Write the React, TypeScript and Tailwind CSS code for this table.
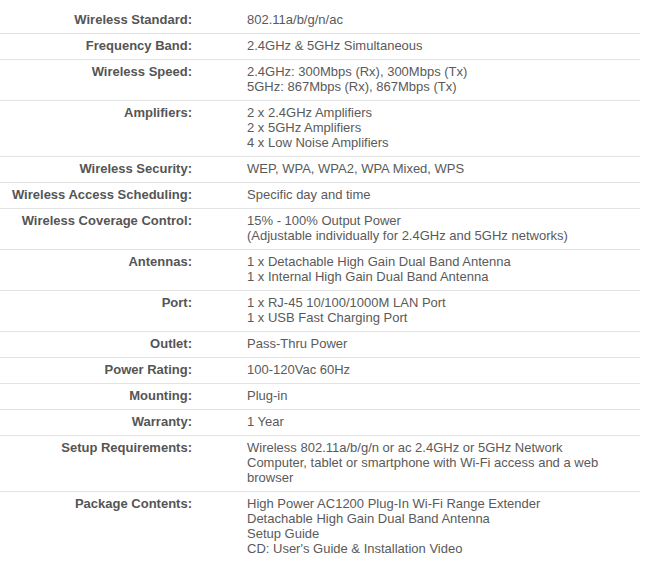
import React from "react";

interface Spec {
  label: string;
  lines: string[];
}

const specs: Spec[] = [
  { label: "Wireless Standard:", lines: ["802.11a/b/g/n/ac"] },
  { label: "Frequency Band:", lines: ["2.4GHz & 5GHz Simultaneous"] },
  {
    label: "Wireless Speed:",
    lines: ["2.4GHz: 300Mbps (Rx), 300Mbps (Tx)", "5GHz: 867Mbps (Rx), 867Mbps (Tx)"],
  },
  {
    label: "Amplifiers:",
    lines: ["2 x 2.4GHz Amplifiers", "2 x 5GHz Amplifiers", "4 x Low Noise Amplifiers"],
  },
  { label: "Wireless Security:", lines: ["WEP, WPA, WPA2, WPA Mixed, WPS"] },
  { label: "Wireless Access Scheduling:", lines: ["Specific day and time"] },
  {
    label: "Wireless Coverage Control:",
    lines: ["15% - 100% Output Power", "(Adjustable individually for 2.4GHz and 5GHz networks)"],
  },
  {
    label: "Antennas:",
    lines: ["1 x Detachable High Gain Dual Band Antenna", "1 x Internal High Gain Dual Band Antenna"],
  },
  {
    label: "Port:",
    lines: ["1 x RJ-45 10/100/1000M LAN Port", "1 x USB Fast Charging Port"],
  },
  { label: "Outlet:", lines: ["Pass-Thru Power"] },
  { label: "Power Rating:", lines: ["100-120Vac 60Hz"] },
  { label: "Mounting:", lines: ["Plug-in"] },
  { label: "Warranty:", lines: ["1 Year"] },
  {
    label: "Setup Requirements:",
    lines: [
      "Wireless 802.11a/b/g/n or ac 2.4GHz or 5GHz Network",
      "Computer, tablet or smartphone with Wi-Fi access and a web browser",
    ],
  },
  {
    label: "Package Contents:",
    lines: [
      "High Power AC1200 Plug-In Wi-Fi Range Extender",
      "Detachable High Gain Dual Band Antenna",
      "Setup Guide",
      "CD: User's Guide & Installation Video",
    ],
  },
];

const SpecRow: React.FC<{ spec: Spec; last: boolean }> = ({ spec, last }) => (
  <div
    className={`flex pt-[4px] pb-[6px] ${last ? "" : "border-b border-[#e3e3e3]"}`}
  >
    <div className="w-[192px] shrink-0 text-right font-bold text-[#555555]">
      {spec.label}
    </div>
    <div className="pl-[55px] w-[448px] pr-[20px] text-[#5a5a5a]">
      {spec.lines.map((line, i) => (
        <div key={i}>{line}</div>
      ))}
    </div>
  </div>
);

const App: React.FC = () => {
  return (
    <div
      className="w-[649px] h-[561px] bg-white pt-[8px] text-[13px] leading-[15px] overflow-hidden"
      style={{ fontFamily: '"Liberation Sans", Arial, sans-serif' }}
    >
      <div className="w-[640px]">
        {specs.map((spec, i) => (
          <SpecRow key={spec.label} spec={spec} last={i === specs.length - 1} />
        ))}
      </div>
    </div>
  );
};

export default App;
